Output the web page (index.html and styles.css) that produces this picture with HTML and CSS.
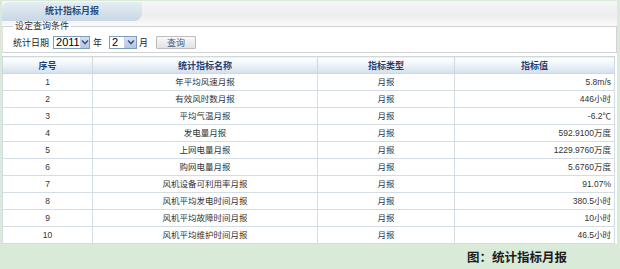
FILE: index.html
```html
<!DOCTYPE html>
<html lang="zh-CN">
<head>
<meta charset="utf-8">
<title>统计指标月报</title>
<link rel="stylesheet" href="styles.css">
</head>
<body>
<div class="frame">
  <div class="panel">
    <div class="tabbar"><div class="tab">统计指标月报</div></div>
    <fieldset class="query">
      <legend>设定查询条件</legend>
      <div class="qrow">
        <span class="lbl">统计日期</span>
        <span class="select sel-year"><span class="val">2011</span><span class="arrow"><svg width="8" height="6" viewBox="0 0 8 6"><path d="M1 1.5 L4 4.5 L7 1.5" fill="none" stroke="#3e5683" stroke-width="1.6"/></svg></span></span>
        <span class="unit u-year">年</span>
        <span class="select sel-month"><span class="val">2</span><span class="arrow"><svg width="8" height="6" viewBox="0 0 8 6"><path d="M1 1.5 L4 4.5 L7 1.5" fill="none" stroke="#3e5683" stroke-width="1.6"/></svg></span></span>
        <span class="unit u-month">月</span>
        <button class="btn" type="button">查询</button>
      </div>
    </fieldset>
    <table class="grid">
      <colgroup><col class="c1"><col class="c2"><col class="c3"><col class="c4"></colgroup>
      <thead>
        <tr><th>序号</th><th>统计指标名称</th><th>指标类型</th><th>指标值</th></tr>
      </thead>
      <tbody>
        <tr><td>1</td><td>年平均风速月报</td><td>月报</td><td class="num">5.8m/s</td></tr>
        <tr><td>2</td><td>有效风时数月报</td><td>月报</td><td class="num">446小时</td></tr>
        <tr><td>3</td><td>平均气温月报</td><td>月报</td><td class="num">-6.2℃</td></tr>
        <tr><td>4</td><td>发电量月报</td><td>月报</td><td class="num">592.9100万度</td></tr>
        <tr><td>5</td><td>上网电量月报</td><td>月报</td><td class="num">1229.9760万度</td></tr>
        <tr><td>6</td><td>购网电量月报</td><td>月报</td><td class="num">5.6760万度</td></tr>
        <tr><td>7</td><td>风机设备可利用率月报</td><td>月报</td><td class="num">91.07%</td></tr>
        <tr><td>8</td><td>风机平均发电时间月报</td><td>月报</td><td class="num">380.5小时</td></tr>
        <tr><td>9</td><td>风机平均故障时间月报</td><td>月报</td><td class="num">10小时</td></tr>
        <tr><td>10</td><td>风机平均维护时间月报</td><td>月报</td><td class="num">46.5小时</td></tr>
      </tbody>
    </table>
  </div>
  <div class="caption">图：统计指标月报</div>
</div>
</body>
</html>
```
FILE: styles.css
```css
html, body {
  margin: 0;
  padding: 0;
}
body {
  width: 620px;
  height: 269px;
  overflow: hidden;
  font-family: "Liberation Sans", "Noto Sans CJK SC", sans-serif;
  color: #333;
}
.frame {
  background: #d9ebd8;
  padding: 1px 3px 0 2px;
  height: 268px;
}
.panel {
  background: #fff;
  height: 243px;
  box-sizing: border-box;
}
.tabbar {
  height: 25px;
  box-sizing: border-box;
  padding-top: 1px;
  background: linear-gradient(#f7f7f9, #ededf1 55%, #fafafb);
}
.tab {
  width: 140px;
  height: 19px;
  line-height: 19px;
  text-align: center;
  font-size: 9px;
  font-weight: bold;
  color: #2b4b7c;
  background: linear-gradient(#e6edf3, #c8d7e4);
  border-radius: 7px 2px 8px 0;
}
.query {
  margin: -5px 0 0 0;
  padding: 3px 10px 3px 10px;
  border: 1px solid #d2d2d2;
  border-left-color: #e4e4e4;
  min-width: 0;
}
.query legend {
  padding: 0 2px;
  font-size: 9px;
  line-height: 11px;
  color: #333;
}
.qrow {
  display: flex;
  align-items: center;
  height: 14px;
  font-size: 9px;
  color: #222;
}
.lbl { margin-right: 4px; }
.select {
  display: flex;
  height: 13px;
  box-sizing: border-box;
  border: 1px solid #7f9db9;
  background: #fff;
}
.sel-year { width: 37px; }
.sel-month { width: 28px; }
.select .val {
  flex: 1;
  font-size: 11px;
  line-height: 11px;
  color: #000;
  padding-left: 2px;
}
.select .arrow {
  width: 11px;
  display: flex;
  align-items: center;
  justify-content: center;
  background: linear-gradient(#d4e0f4, #b3c6e6);
  border-left: 1px solid #c3d0e6;
}
.u-year { margin: 0 7px 0 3px; }
.u-month { margin: 0 8px 0 2px; }
.btn {
  width: 40px;
  height: 13px;
  padding: 0;
  box-sizing: border-box;
  border: 1px solid #bdbdbd;
  border-radius: 1px;
  background: linear-gradient(#fafafa, #e2e2e2);
  font-family: "Noto Sans CJK SC", sans-serif;
  font-size: 9px;
  line-height: 11px;
  color: #4c5c7c;
}
.grid {
  margin-top: 3px;
  width: 612px;
  border-collapse: collapse;
  table-layout: fixed;
  font-size: 8.5px;
  border: 1px solid #cfd7df;
}
.c1 { width: 90px; }
.c2 { width: 225px; }
.c3 { width: 137px; }
.c4 { width: 160px; }
.grid th {
  height: 16px;
  padding: 0;
  font-weight: bold;
  font-size: 9px;
  color: #1e3f74;
  background: linear-gradient(#ffffff, #f1f5f9 40%, #d2e0ee);
  border: 1px solid #cfd7df;
}
.grid td {
  height: 16px;
  padding: 0;
  text-align: center;
  color: #333;
  border: 1px solid #d5dde4;
  line-height: 12px;
}
.grid td.num {
  text-align: right;
  padding-right: 3px;
}
.caption {
  height: 25px;
  line-height: 25px;
  text-align: right;
  padding-right: 50px;
  font-family: "Noto Sans CJK SC", sans-serif;
  font-size: 12.5px;
  font-weight: bold;
  color: #1c1c1c;
}
```
